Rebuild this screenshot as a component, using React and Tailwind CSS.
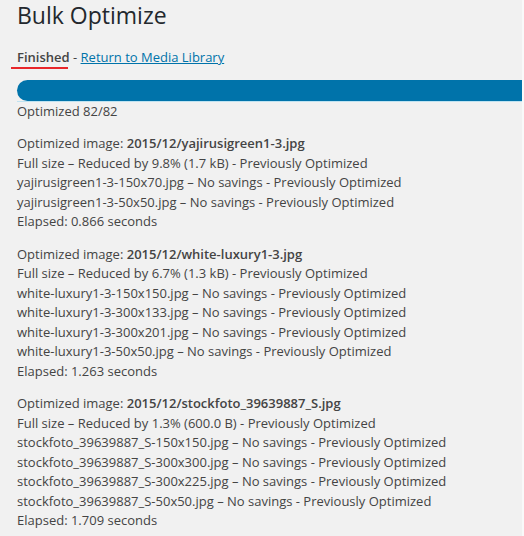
import React from "react";

const blocks = [
  {
    file: "2015/12/yajirusigreen1-3.jpg",
    full: "Full size – Reduced by 9.8% (1.7 kB) - Previously Optimized",
    sizes: [
      "yajirusigreen1-3-150x70.jpg – No savings - Previously Optimized",
      "yajirusigreen1-3-50x50.jpg – No savings - Previously Optimized",
    ],
    elapsed: "Elapsed: 0.866 seconds",
  },
  {
    file: "2015/12/white-luxury1-3.jpg",
    full: "Full size – Reduced by 6.7% (1.3 kB) - Previously Optimized",
    sizes: [
      "white-luxury1-3-150x150.jpg – No savings - Previously Optimized",
      "white-luxury1-3-300x133.jpg – No savings - Previously Optimized",
      "white-luxury1-3-300x201.jpg – No savings - Previously Optimized",
      "white-luxury1-3-50x50.jpg – No savings - Previously Optimized",
    ],
    elapsed: "Elapsed: 1.263 seconds",
  },
  {
    file: "2015/12/stockfoto_39639887_S.jpg",
    full: "Full size – Reduced by 1.3% (600.0 B) - Previously Optimized",
    sizes: [
      "stockfoto_39639887_S-150x150.jpg – No savings - Previously Optimized",
      "stockfoto_39639887_S-300x300.jpg – No savings - Previously Optimized",
      "stockfoto_39639887_S-300x225.jpg – No savings - Previously Optimized",
      "stockfoto_39639887_S-50x50.jpg – No savings - Previously Optimized",
    ],
    elapsed: "Elapsed: 1.709 seconds",
  },
];

const App = () => {
  return (
    <div className="h-[536px] overflow-hidden bg-[#f1f1f1] border-r-2 border-[#f9f9f9] font-['Open_Sans',sans-serif] text-[13px] leading-[19.5px] text-[#444]">
      <div className="pl-[17px]">
        <h1 className="text-[23px] leading-[30px] text-[#23282d] font-normal">
          Bulk Optimize
        </h1>

        <p className="relative mt-[18px]">
          <strong className="font-semibold">Finished</strong> -{" "}
          <a href="#" className="text-[#0073aa] underline">
            Return to Media Library
          </a>
          <span className="absolute left-[-6px] top-[19px] h-[2px] w-[57px] bg-[#e8262a]" />
        </p>

        <div className="mt-[12px] border-b border-[#bfe3f1]">
          <div className="h-[21px] rounded-l-full bg-[#0073aa]" />
        </div>
        <p>Optimized 82/82</p>

        {blocks.map((block) => (
          <div key={block.file} className="mt-[13px]">
            <p>
              Optimized image: <strong className="font-semibold">{block.file}</strong>
            </p>
            <p>{block.full}</p>
            {block.sizes.map((line) => (
              <p key={line}>{line}</p>
            ))}
            <p>{block.elapsed}</p>
          </div>
        ))}
      </div>
    </div>
  );
};

export default App;
